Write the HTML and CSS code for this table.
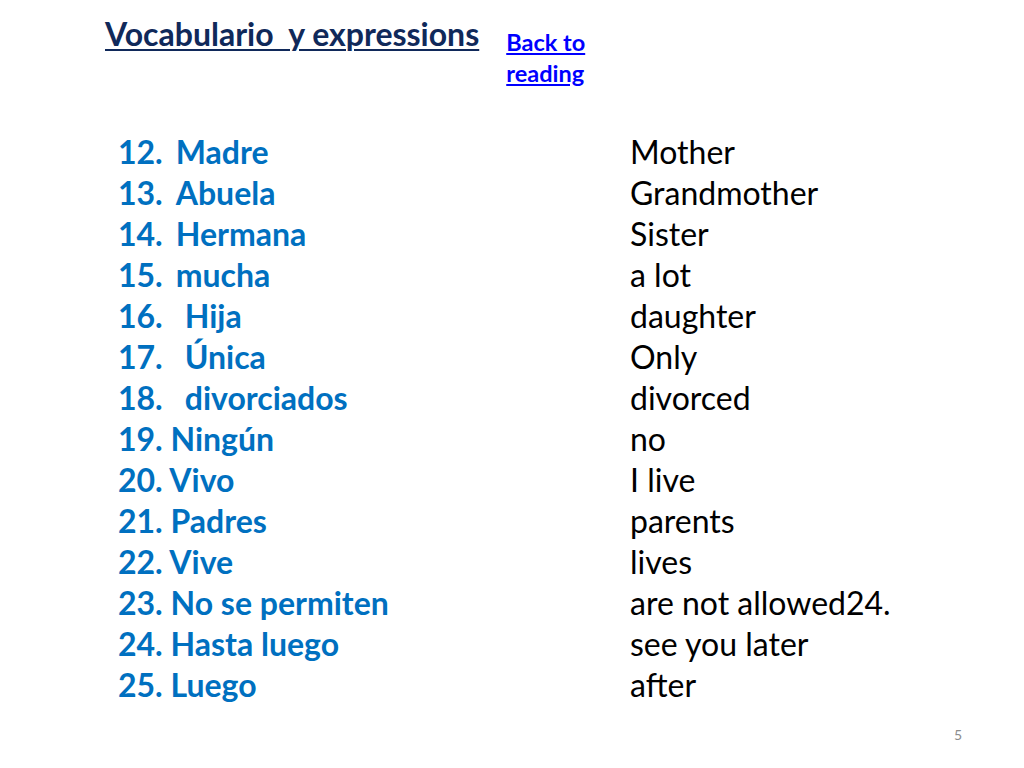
FILE: index.html
```html
<!DOCTYPE html>
<html>
<head>
<meta charset="utf-8">
<link rel="stylesheet" href="styles.css">
</head>
<body>
<div class="slide">
  <header class="top">
    <h1 class="title">Vocabulario&nbsp; y expressions</h1>
    <a class="back" href="#">Back to<br>reading</a>
  </header>
  <div class="list">
    <div class="es">12.<span class="gap2"></span>Madre</div><div class="en">Mother</div>
    <div class="es">13.<span class="gap2"></span>Abuela</div><div class="en">Grandmother</div>
    <div class="es">14.<span class="gap2"></span>Hermana</div><div class="en">Sister</div>
    <div class="es">15.<span class="gap2"></span>mucha</div><div class="en">a lot</div>
    <div class="es">16.<span class="gap3"></span>Hija</div><div class="en">daughter</div>
    <div class="es">17.<span class="gap3"></span>Única</div><div class="en">Only</div>
    <div class="es">18.<span class="gap3"></span>divorciados</div><div class="en">divorced</div>
    <div class="es">19. Ningún</div><div class="en">no</div>
    <div class="es">20. Vivo</div><div class="en">I live</div>
    <div class="es">21. Padres</div><div class="en">parents</div>
    <div class="es">22. Vive</div><div class="en">lives</div>
    <div class="es">23. No se permiten</div><div class="en">are not allowed24.</div>
    <div class="es">24. Hasta luego</div><div class="en">see you later</div>
    <div class="es">25. Luego</div><div class="en">after</div>
  </div>
  <div class="pagenum">5</div>
</div>
</body>
</html>
```
FILE: styles.css
```css
html, body {
  margin: 0;
  padding: 0;
  background: #ffffff;
}
.slide {
  width: 1024px;
  height: 768px;
  box-sizing: border-box;
  font-family: Lato, "Open Sans", sans-serif;
  display: flex;
  flex-direction: column;
}
.top {
  display: flex;
  align-items: flex-start;
  padding: 15px 0 0 105px;
  gap: 27px;
  height: 118px;
  box-sizing: border-box;
}
.title {
  margin: 0;
  font-size: 32px;
  font-weight: 700;
  color: #10295a;
  text-decoration: underline;
  text-decoration-thickness: 2px;
  text-underline-offset: 3px;
  line-height: 38px;
  white-space: nowrap;
}
.back {
  margin-top: 12px;
  font-size: 23.5px;
  font-weight: 700;
  color: #0000ff;
  line-height: 31px;
  text-decoration: underline;
  text-underline-offset: 2px;
}
.list {
  display: grid;
  grid-template-columns: 512px auto;
  padding-left: 118px;
  font-size: 32px;
  line-height: 41px;
  margin-top: 13px;
}
.es {
  color: #0070c0;
  font-weight: 700;
  white-space: nowrap;
}
.gap2 {
  display: inline-block;
  width: 13px;
}
.gap3 {
  display: inline-block;
  width: 22px;
}
.en {
  color: #000000;
  white-space: nowrap;
}
.pagenum {
  margin-top: auto;
  align-self: flex-end;
  margin-right: 62px;
  margin-bottom: 25px;
  font-size: 14px;
  color: #8c8c8c;
}
```
